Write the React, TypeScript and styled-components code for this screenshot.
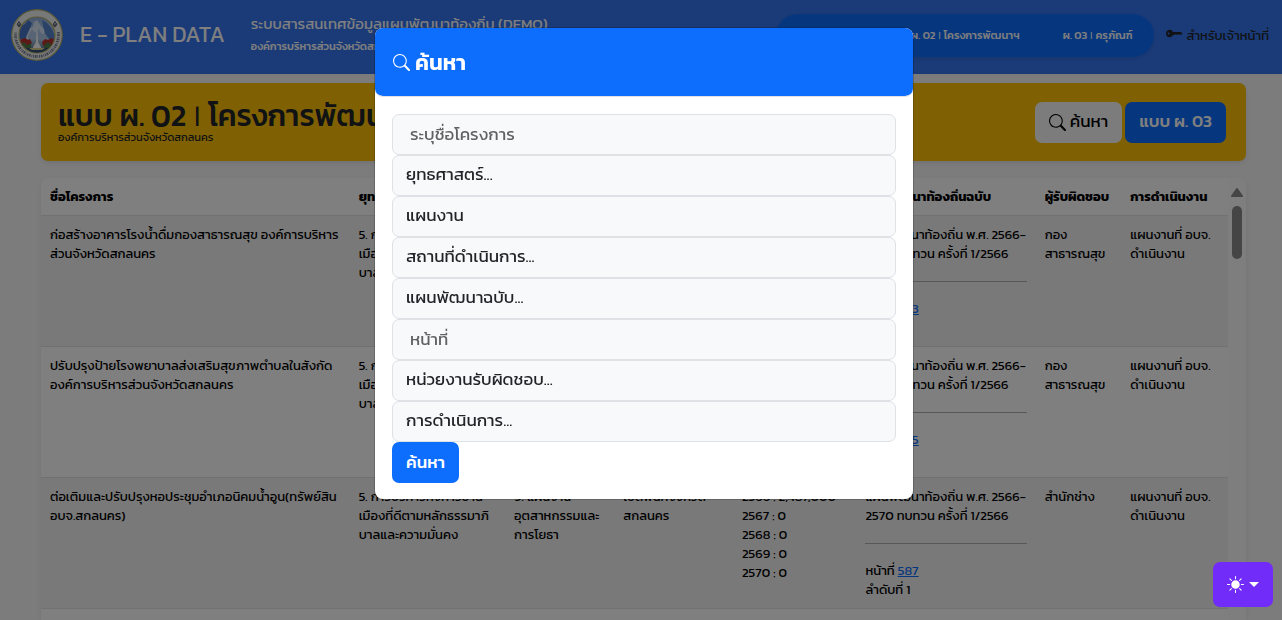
import React from 'react';
import styled, { createGlobalStyle, css } from 'styled-components';
import { BsKeyFill, BsSearch, BsSunFill } from 'react-icons/bs';

const GlobalStyle = createGlobalStyle`
  *, *::before, *::after { box-sizing: border-box; }
  html { height: 100%; overflow: hidden; }
  body {
    margin: 0;
    height: 100%;
    background: #f8f8f8;
    color: #000;
    font-family: Kanit, 'Noto Sans Thai', 'Noto Sans', sans-serif;
    font-size: 17px;
    font-weight: 400;
    line-height: 1.5;
  }
  #root { height: 100%; }
  button, input, select { font: inherit; }
  h1, h2, p { margin: 0; }
`;

const Page = styled.div`
  height: 100%;
  display: flex;
  flex-direction: column;
  overflow: hidden;
`;

const Header = styled.header`
  flex: none;
  display: flex;
  align-items: center;
  min-height: 74px;
  padding: 0 13px 4px 11px;
  background: #3575f0;
  color: #fff;
`;

const Seal = styled.svg`
  flex: none;
  width: 52px;
  height: 52px;
`;

const Brand = styled.span`
  margin-left: 17px;
  font-size: 22px;
  line-height: 32px;
  white-space: nowrap;
`;

const SystemName = styled.div`
  margin-left: 26px;
  font-size: 15px;
  line-height: 22px;
  white-space: nowrap;

  small {
    display: block;
    font-size: 11px;
    font-weight: 500;
  }
`;

const Nav = styled.nav`
  display: flex;
  align-items: center;
  justify-content: flex-end;
  gap: 43px;
  width: 378px;
  height: 43px;
  margin-left: auto;
  padding: 0 22px;
  border-radius: 22px;
  background: #0d6efd;
  box-shadow: 0 2px 4px rgba(0, 0, 0, 0.08);
`;

const NavLink = styled.a`
  color: #fff;
  font-size: 11px;
  font-weight: 500;
  text-decoration: none;
  white-space: nowrap;
`;

const Separator = styled.span`
  margin: 0 0.1em;
  font-size: 0.75em;
  font-weight: 400;
  vertical-align: 8%;
`;

const StaffLink = styled.a`
  display: flex;
  align-items: center;
  gap: 3px;
  margin-left: 12px;
  padding-top: 2px;
  color: #212529;
  font-size: 13px;
  text-decoration: none;
  white-space: nowrap;

  svg { width: 17px; height: 17px; margin-bottom: 6px; }
`;

const Main = styled.main`
  flex: 1;
  min-height: 0;
  display: flex;
  flex-direction: column;
  gap: 17px;
  padding: 9px 36px 0 41px;
`;

const Banner = styled.section`
  flex: none;
  display: flex;
  align-items: center;
  justify-content: space-between;
  height: 78px;
  padding: 0 20px 2px 17px;
  border-radius: 7px;
  background: #ffc107;
  box-shadow: 0 2px 4px rgba(0, 0, 0, 0.08);
`;

const BannerTitle = styled.h1`
  color: #212529;
  font-size: 30px;
  font-weight: 500;
  line-height: 32px;
  white-space: nowrap;
`;

const BannerOwner = styled.p`
  color: #212529;
  font-size: 11px;
  line-height: 12px;
`;

const Actions = styled.div`
  display: flex;
  gap: 3px;
  padding-top: 2px;
`;

const Button = styled.button<{ $tone: 'light' | 'primary' }>`
  display: inline-flex;
  align-items: center;
  gap: 4px;
  height: 41px;
  padding: 0 14px;
  border: 0;
  border-radius: 7px;
  white-space: nowrap;
  ${({ $tone }) =>
    $tone === 'light'
      ? css`background: #f8f9fa; color: #000;`
      : css`background: #0d6efd; color: #fff; font-weight: 500;`}

  svg { width: 17px; height: 17px; }
`;

const TablePanel = styled.section`
  flex: 1;
  min-height: 0;
  display: flex;
  overflow: hidden;
  border-radius: 7px 7px 0 0;
  background: #fff;
  box-shadow: 0 2px 4px rgba(0, 0, 0, 0.08);
`;

const TableScroll = styled.div`
  flex: 1;
  min-width: 0;
  overflow: hidden;
`;

const Table = styled.table`
  width: 100%;
  table-layout: fixed;
  border-collapse: collapse;
  font-size: 13px;
  line-height: 19px;

  th, td {
    padding: 9px 9px 8px;
    border-bottom: 1px solid #dee2e6;
    text-align: left;
    vertical-align: top;
    white-space: nowrap;
  }

  th { padding-bottom: 9px; font-weight: 700; }
  tbody tr { height: 131px; }
  tbody tr:nth-child(odd) { background: #f2f2f2; }
`;

const Column = styled.col<{ $share: number }>`
  width: ${({ $share }) => $share}%;
`;

const Divider = styled.hr`
  margin: 18px 0 17px;
  border: 0;
  border-top: 1px solid #b0b0b0;
`;

const PageLink = styled.a`
  color: #0d6efd;
  text-decoration: underline;
`;

const ScrollTrack = styled.div`
  flex: none;
  display: flex;
  flex-direction: column;
  align-items: center;
  gap: 9px;
  width: 18px;
  padding-top: 10px;
  background: #fcfcfc;
`;

const ScrollArrow = styled.svg`
  width: 12px;
  height: 9px;
  fill: #8b8b8b;
`;

const ScrollThumb = styled.div`
  width: 10px;
  height: 53px;
  border-radius: 5px;
  background: #8b8b8b;
`;

const Backdrop = styled.div`
  position: fixed;
  inset: 0;
  display: flex;
  align-items: flex-start;
  justify-content: center;
  padding: 28px 12px 28px 18px;
  background: rgba(0, 0, 0, 0.5);
`;

const Dialog = styled.div`
  width: 100%;
  max-width: 538px;
  border-radius: 8px;
  background: #fff;
  box-shadow: 0 0 0 1px rgba(0, 0, 0, 0.18);
`;

const DialogHeader = styled.div`
  display: flex;
  align-items: center;
  gap: 5px;
  height: 69px;
  padding: 1px 18px 0;
  border-bottom: 1px solid #dee2e6;
  border-radius: 8px;
  background: #0d6efd;
  background-clip: padding-box;
  color: #fff;

  svg { width: 17px; height: 17px; }
`;

const DialogTitle = styled.h2`
  font-size: 22px;
  font-weight: 600;
  line-height: 32px;
`;

const SearchForm = styled.form`
  display: flex;
  flex-direction: column;
  align-items: flex-start;
  padding: 17px 17px 16px;
`;

const fieldStyle = css`
  width: 100%;
  height: 41px;
  border: 1px solid #dee2e6;
  border-radius: 7px;
  outline: 0;
  background: #f8f9fa;
  color: #212529;
`;

const TextField = styled.input`
  ${fieldStyle}
  padding: 0 17px 2px;

  &::placeholder { color: #5f6164; opacity: 1; }
`;

const SelectField = styled.select`
  ${fieldStyle}
  appearance: none;
  padding: 0 13px 1px;
`;

const ThemeButton = styled.button`
  position: fixed;
  right: 9px;
  bottom: 13px;
  display: flex;
  align-items: center;
  justify-content: center;
  gap: 5px;
  width: 60px;
  height: 45px;
  border: 0;
  border-radius: 7px;
  background: #712cf9;
  color: #fff;

  svg { width: 17px; height: 17px; }

  &::after {
    content: '';
    border: 5px solid transparent;
    border-top-color: #fff;
    border-bottom: 0;
  }
`;

const COLUMNS = [
  { label: 'ชื่อโครงการ', share: 26 },
  { label: 'ยุทธศาสตร์', share: 13.1 },
  { label: 'แผนงาน', share: 9.2 },
  { label: 'สถานที่', share: 10 },
  { label: 'งบประมาณ', share: 10.4 },
  { label: 'แผนพัฒนาท้องถิ่นฉบับ', share: 15.1 },
  { label: 'ผู้รับผิดชอบ', share: 7.2 },
  { label: 'การดำเนินงาน', share: 9 },
];

type Project = {
  name: string[];
  plan: string[];
  place: string[];
  budget: string[];
  page: string;
  owner: string[];
};

const STRATEGY = ['5. การบริหารกิจการบ้าน', 'เมืองที่ดีตามหลักธรรมาภิ', 'บาลและความมั่นคง'];

const PROJECTS: Project[] = [
  {
    name: ['ก่อสร้างอาคารโรงน้ำดื่มกองสาธารณสุข องค์การบริหาร', 'ส่วนจังหวัดสกลนคร'],
    plan: ['5. แผนงาน', 'สาธารณสุข'],
    place: ['อบจ.', 'สกลนคร'],
    budget: ['2566 : 0', '2567 : 0', '2568 : 0', '2569 : 0', '2570 : 0'],
    page: '583',
    owner: ['กอง', 'สาธารณสุข'],
  },
  {
    name: ['ปรับปรุงป้ายโรงพยาบาลส่งเสริมสุขภาพตำบลในสังกัด', 'องค์การบริหารส่วนจังหวัดสกลนคร'],
    plan: ['5. แผนงาน', 'สาธารณสุข'],
    place: ['อบจ.', 'สกลนคร'],
    budget: ['2566 : 0', '2567 : 0', '2568 : 0', '2569 : 0', '2570 : 0'],
    page: '585',
    owner: ['กอง', 'สาธารณสุข'],
  },
  {
    name: ['ต่อเติมและปรับปรุงหอประชุมอำเภอนิคมน้ำอูน(ทรัพย์สิน', 'อบจ.สกลนคร)'],
    plan: ['9. แผนงาน', 'อุตสาหกรรมและ', 'การโยธา'],
    place: ['เขตพื้นที่จังหวัด', 'สกลนคร'],
    budget: ['2566 : 2,487,000', '2567 : 0', '2568 : 0', '2569 : 0', '2570 : 0'],
    page: '587',
    owner: ['สำนักช่าง'],
  },
];

const FIELDS: { kind: 'text' | 'select'; label: string }[] = [
  { kind: 'text', label: 'ระบุชื่อโครงการ' },
  { kind: 'select', label: 'ยุทธศาสตร์...' },
  { kind: 'select', label: 'แผนงาน' },
  { kind: 'select', label: 'สถานที่ดำเนินการ...' },
  { kind: 'select', label: 'แผนพัฒนาฉบับ...' },
  { kind: 'text', label: 'หน้าที่' },
  { kind: 'select', label: 'หน่วยงานรับผิดชอบ...' },
  { kind: 'select', label: 'การดำเนินการ...' },
];

function Lines({ items }: { items: string[] }) {
  return (
    <>
      {items.map((line, index) => (
        <React.Fragment key={index}>
          {index > 0 && <br />}
          {line}
        </React.Fragment>
      ))}
    </>
  );
}

function ProvinceSeal() {
  return (
    <Seal viewBox="0 0 52 52" role="img" aria-label="ตราองค์การบริหารส่วนจังหวัดสกลนคร">
      <defs>
        <clipPath id="scene"><circle cx="26" cy="26" r="17.5" /></clipPath>
        <clipPath id="lowerRing"><rect x="0" y="23" width="52" height="29" /></clipPath>
        <linearGradient id="sky" x1="0" y1="0" x2="0" y2="1">
          <stop offset="0" stopColor="#8fb0de" />
          <stop offset="0.6" stopColor="#b4cdec" />
          <stop offset="1" stopColor="#3f5f7a" />
        </linearGradient>
      </defs>
      <circle cx="26" cy="26" r="25.3" fill="#eef0f0" stroke="#b4b06a" strokeWidth="1.2" />
      <circle cx="26" cy="26" r="21.5" fill="none" stroke="#4f5570" strokeWidth="2.8"
        strokeDasharray="1.2 0.9 0.7 0.9 1.6 0.8" pathLength="135" opacity="0.75"
        clipPath="url(#lowerRing)" />
      <g fill="none" stroke="#565b70" strokeWidth="0.9">
        <path d="M6 15l2-2 2 2-2 3zM8 12v6M6 16h4" />
        <path d="M42 15l2-2 2 2-2 3zM44 12v6M42 16h4" />
      </g>
      <circle cx="26" cy="26" r="18" fill="url(#sky)" stroke="#b7b06a" strokeWidth="1.2" />
      <g clipPath="url(#scene)">
        <path d="M8 26l2-9 4-2 3-4 4 3-2 6-4 10H8z" fill="#4777c4" />
        <path d="M31 11l5 3 5 6 4 10h-9l-3-8z" fill="#5584cc" />
        <path d="M15 28l4-9 3-1 1-5 3-2 4 6 3 3 1 5 4 5H15z" fill="#e9f1fa" opacity="0.75" />
        <path d="M17 27l4-7 3 4 3-5 4 6 3-1 4 6H17z" fill="#9dbce6" opacity="0.7" />
        <path d="M8 31l6-2 3 2 2-1 2 4-3 3H8zM31 33l3-3 3 1 3-2 5 2v6H32z" fill="#b8332e" />
        <path d="M9 36l4-3 3 3 4-2v5H9zM33 36l4-3 4 3 3-2v5H33z" fill="#4f7a48" />
        <path d="M25 33l.4-9 .6-8 .6 8 .4 9 3 5v3h-8v-3z" fill="#fdfdfd" />
        <path d="M12 39h28v6H12z" fill="#33507a" />
        <path d="M18 39h16l-3 2H21z" fill="#d9cf8a" />
      </g>
    </Seal>
  );
}

function SearchDialog() {
  return (
    <Backdrop>
      <Dialog role="dialog" aria-modal="true" aria-labelledby="search-title">
        <DialogHeader>
          <BsSearch aria-hidden />
          <DialogTitle id="search-title">ค้นหา</DialogTitle>
        </DialogHeader>
        <SearchForm onSubmit={(event) => event.preventDefault()}>
          {FIELDS.map(({ kind, label }) =>
            kind === 'text' ? (
              <TextField key={label} type="text" placeholder={label} aria-label={label} />
            ) : (
              <SelectField key={label} aria-label={label}>
                <option>{label}</option>
              </SelectField>
            ),
          )}
          <Button $tone="primary" type="submit">ค้นหา</Button>
        </SearchForm>
      </Dialog>
    </Backdrop>
  );
}

export default function App() {
  return (
    <>
      <GlobalStyle />
      <Page>
        <Header>
          <ProvinceSeal />
          <Brand>E - PLAN DATA</Brand>
          <SystemName>
            ระบบสารสนเทศข้อมูลแผนพัฒนาท้องถิ่น (DEMO)
            <small>องค์การบริหารส่วนจังหวัดสกลนคร</small>
          </SystemName>
          <Nav>
            <NavLink href="#p02">ผ. 02 <Separator>|</Separator> โครงการพัฒนาฯ</NavLink>
            <NavLink href="#p03">ผ. 03 <Separator>|</Separator> ครุภัณฑ์</NavLink>
          </Nav>
          <StaffLink href="#staff">
            <BsKeyFill aria-hidden />
            สำหรับเจ้าหน้าที่
          </StaffLink>
        </Header>
        <Main>
          <Banner>
            <div>
              <BannerTitle>แบบ ผ. 02 <Separator>|</Separator> โครงการพัฒนาท้องถิ่น</BannerTitle>
              <BannerOwner>องค์การบริหารส่วนจังหวัดสกลนคร</BannerOwner>
            </div>
            <Actions>
              <Button $tone="light" type="button"><BsSearch aria-hidden />ค้นหา</Button>
              <Button $tone="primary" type="button">แบบ ผ. 03</Button>
            </Actions>
          </Banner>
          <TablePanel>
            <TableScroll>
              <Table>
                <colgroup>
                  {COLUMNS.map(({ label, share }) => <Column key={label} $share={share} />)}
                </colgroup>
                <thead>
                  <tr>
                    {COLUMNS.map(({ label }) => <th key={label} scope="col">{label}</th>)}
                  </tr>
                </thead>
                <tbody>
                  {PROJECTS.map((project) => (
                    <tr key={project.page}>
                      <td><Lines items={project.name} /></td>
                      <td><Lines items={STRATEGY} /></td>
                      <td><Lines items={project.plan} /></td>
                      <td><Lines items={project.place} /></td>
                      <td><Lines items={project.budget} /></td>
                      <td>
                        <Lines items={['แผนพัฒนาท้องถิ่น พ.ศ. 2566-', '2570 ทบทวน ครั้งที่ 1/2566']} />
                        <Divider />
                        หน้าที่ <PageLink href={`#page-${project.page}`}>{project.page}</PageLink>
                        <br />
                        ลำดับที่ 1
                      </td>
                      <td><Lines items={project.owner} /></td>
                      <td><Lines items={['แผนงานที่ อบจ.', 'ดำเนินงาน']} /></td>
                    </tr>
                  ))}
                </tbody>
              </Table>
            </TableScroll>
            <ScrollTrack aria-hidden>
              <ScrollArrow viewBox="0 0 12 9">
                <path d="M5.2.6a1 1 0 0 1 1.6 0l4.8 6.6A1 1 0 0 1 10.8 9H1.2a1 1 0 0 1-.8-1.8z" />
              </ScrollArrow>
              <ScrollThumb />
            </ScrollTrack>
          </TablePanel>
        </Main>
      </Page>
      <SearchDialog />
      <ThemeButton type="button" aria-label="เปลี่ยนธีม">
        <BsSunFill aria-hidden />
      </ThemeButton>
    </>
  );
}
